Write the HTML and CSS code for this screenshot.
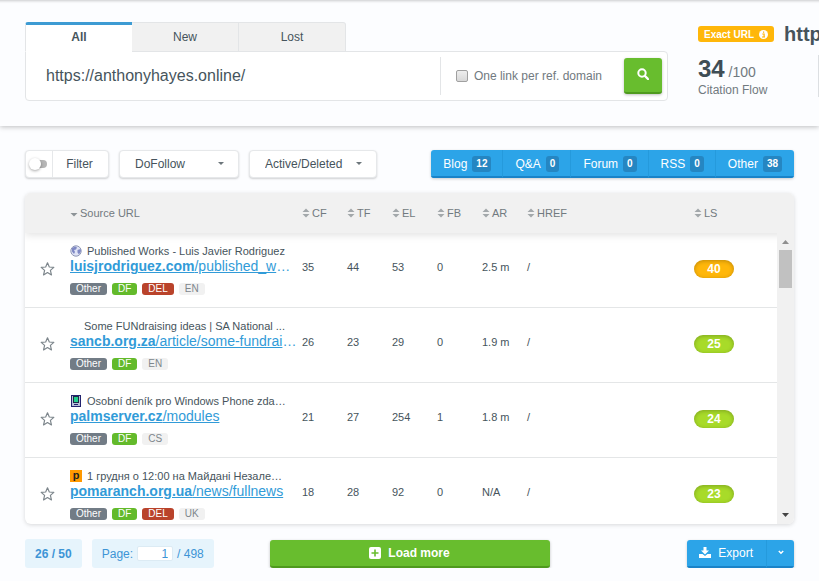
FILE: index.html
```
<!DOCTYPE html>
<html lang="en">
<head>
    <meta charset="UTF-8">
    <meta name="viewport" content="width=device-width, initial-scale=1.0">
    <title>Backlinks</title>
    <link rel="stylesheet" href="styles.css">
</head>
<body>
    <svg class="sprite" width="0" height="0">
        <symbol id="star" viewBox="0 0 14 14">
            <path d="M7 1.2l1.7 3.9 4.2.4-3.2 2.8 1 4.2L7 10.3l-3.7 2.2 1-4.2L1.1 5.5l4.2-.4z" fill="none" stroke="#7d868c" stroke-width="1.1" stroke-linejoin="round"/>
        </symbol>
        <symbol id="sort" viewBox="0 0 8 10">
            <path d="M4 .5L7.5 4h-7zM4 9.5L.5 6h7z" fill="#a3a8ab"/>
        </symbol>
    </svg>

    <header class="top">
        <div class="search">
            <div class="tabs">
                <button class="tab active" type="button">All</button>
                <button class="tab" type="button">New</button>
                <button class="tab" type="button">Lost</button>
            </div>
            <form class="search-box">
                <input class="url-input" type="text" aria-label="URL" value="https://anthonyhayes.online/">
                <label class="one-link"><input type="checkbox"> One link per ref. domain</label>
                <button class="search-btn green" type="button" aria-label="Search">
                    <svg width="12" height="12" viewBox="0 0 12 12"><circle cx="5" cy="5" r="3.7" fill="none" stroke="#fff" stroke-width="2"/><path d="M8 8l3 3" stroke="#fff" stroke-width="2.4" stroke-linecap="round"/></svg>
                </button>
            </form>
        </div>
        <div class="summary">
            <div class="summary-title">
                <span class="exact">Exact URL
                    <svg width="9" height="9" viewBox="0 0 9 9"><circle cx="4.5" cy="4.5" r="4.5" fill="#fff"/><path d="M3.3 4h1.8v2.6M3 7h3M4 2.2h1.2" stroke="#ffb400" stroke-width="1.2" fill="none"/></svg>
                </span>
                <span class="summary-url">http</span>
            </div>
            <div class="metrics">
                <div class="metric">
                    <div class="score"><b>34</b> /100</div>
                    <div class="score-name">Citation Flow</div>
                </div>
            </div>
        </div>
    </header>

    <main class="content">
        <div class="toolbar">
            <div class="filter">
                <label class="switch"><input type="checkbox" aria-label="Enable filter"><span class="knob"></span></label>
                <button class="filter-btn" type="button">Filter</button>
            </div>
            <div class="dropdown follow">
                <select aria-label="Link type"><option>DoFollow</option></select>
            </div>
            <div class="dropdown state">
                <select aria-label="Link state"><option>Active/Deleted</option></select>
            </div>
            <div class="types">
                <button type="button">Blog <span class="count">12</span></button>
                <button type="button">Q&amp;A <span class="count">0</span></button>
                <button type="button">Forum <span class="count">0</span></button>
                <button type="button">RSS <span class="count">0</span></button>
                <button type="button">Other <span class="count">38</span></button>
            </div>
        </div>

        <div class="card">
            <table class="links">
                <thead>
                    <tr>
                        <th></th>
                        <th><svg class="sort" viewBox="0 0 8 10"><path d="M.5 5h7L4 8.5z" fill="#8d9397"/></svg>Source URL</th>
                        <th><svg class="sort"><use href="#sort"/></svg>CF</th>
                        <th><svg class="sort"><use href="#sort"/></svg>TF</th>
                        <th><svg class="sort"><use href="#sort"/></svg>EL</th>
                        <th><svg class="sort"><use href="#sort"/></svg>FB</th>
                        <th><svg class="sort"><use href="#sort"/></svg>AR</th>
                        <th><svg class="sort"><use href="#sort"/></svg>HREF</th>
                        <th><svg class="sort"><use href="#sort"/></svg>LS</th>
                    </tr>
                </thead>
                <tbody>
                    <tr>
                        <td class="fav"><svg class="star"><use href="#star"/></svg></td>
                        <td class="source">
                            <div class="title">
                                <svg class="favicon" viewBox="0 0 12 12"><circle cx="6" cy="6" r="5.2" fill="#dfe3f5" stroke="#8f97b5"/><path d="M2 3l3-1.5 2 1-1 2-2 .5 1 2-1 2-2-2.5zM7.5 5l3-1 .5 2-2 3.5-1.500-2z" fill="#7f88c4"/></svg>
                                <span>Published Works - Luis Javier Rodriguez</span>
                            </div>
                            <div class="link"><a href="#"><b>luisjrodriguez.com</b>/published_w</a>…</div>
                            <div class="tags"><span class="tag other">Other</span><span class="tag df">DF</span><span class="tag del">DEL</span><span class="tag">EN</span></div>
                        </td>
                        <td>35</td>
                        <td>44</td>
                        <td>53</td>
                        <td>0</td>
                        <td>2.5 m</td>
                        <td>/</td>
                        <td><span class="pill orange">40</span></td>
                    </tr>
                    <tr>
                        <td class="fav"><svg class="star"><use href="#star"/></svg></td>
                        <td class="source">
                            <div class="title no-icon"><span>Some FUNdraising ideas | SA National ...</span></div>
                            <div class="link"><a href="#"><b>sancb.org.za</b>/article/some-fundrai</a>…</div>
                            <div class="tags"><span class="tag other">Other</span><span class="tag df">DF</span><span class="tag">EN</span></div>
                        </td>
                        <td>26</td>
                        <td>23</td>
                        <td>29</td>
                        <td>0</td>
                        <td>1.9 m</td>
                        <td>/</td>
                        <td><span class="pill">25</span></td>
                    </tr>
                    <tr>
                        <td class="fav"><svg class="star"><use href="#star"/></svg></td>
                        <td class="source">
                            <div class="title">
                                <svg class="favicon" viewBox="0 0 12 12"><path d="M1 0h10v12H1z" fill="#23236e"/><path d="M2 1h8v10H2z" fill="#b9c0d8"/><path d="M3 1h6v7H3z" fill="#1c2a4a"/><path d="M4 2h4v5H4z" fill="#22d08a"/><path d="M4 9h4v1H4z" fill="#23236e"/></svg>
                                <span>Osobní deník pro Windows Phone zda…</span>
                            </div>
                            <div class="link"><a href="#"><b>palmserver.cz</b>/modules</a></div>
                            <div class="tags"><span class="tag other">Other</span><span class="tag df">DF</span><span class="tag">CS</span></div>
                        </td>
                        <td>21</td>
                        <td>27</td>
                        <td>254</td>
                        <td>1</td>
                        <td>1.8 m</td>
                        <td>/</td>
                        <td><span class="pill">24</span></td>
                    </tr>
                    <tr>
                        <td class="fav"><svg class="star"><use href="#star"/></svg></td>
                        <td class="source">
                            <div class="title">
                                <span class="favicon letter">p</span>
                                <span>1 грудня о 12:00 на Майдані Незале…</span>
                            </div>
                            <div class="link"><a href="#"><b>pomaranch.org.ua</b>/news/fullnews</a></div>
                            <div class="tags"><span class="tag other">Other</span><span class="tag df">DF</span><span class="tag del">DEL</span><span class="tag">UK</span></div>
                        </td>
                        <td>18</td>
                        <td>28</td>
                        <td>92</td>
                        <td>0</td>
                        <td>N/A</td>
                        <td>/</td>
                        <td><span class="pill">23</span></td>
                    </tr>
                </tbody>
            </table>
            <div class="scrollbar">
                <svg width="7" height="4" viewBox="0 0 7 4"><path d="M3.5 0L7 4H0z" fill="#8f8f8f"/></svg>
                <div class="thumb"></div>
                <svg class="down" width="7" height="4" viewBox="0 0 7 4"><path d="M0 0h7L3.5 4z" fill="#444"/></svg>
            </div>
        </div>

        <div class="footer">
            <div class="pages">
                <div class="info"><b>26 / 50</b></div>
                <div class="info">
                    <label for="page">Page:</label>
                    <input id="page" type="text" value="1">
                    <span>/ 498</span>
                </div>
            </div>
            <button class="load green" type="button">
                <svg width="12" height="12" viewBox="0 0 12 12"><rect width="12" height="12" rx="2" fill="#fff"/><path d="M6 2.5v7M2.5 6h7" stroke="#68bd2e" stroke-width="1.6"/></svg>
                Load more
            </button>
            <div class="export">
                <button type="button">
                    <svg width="12" height="11" viewBox="0 0 12 11"><path d="M4.5 0h3v3.5H10L6 7.5 2 3.5h2.5zM0 7h3.5L6 9l2.500-2H12v4H0z" fill="#fff"/></svg>
                    Export
                </button>
                <button class="more" type="button" aria-label="Export options">
                    <svg width="6" height="5" viewBox="0 0 6 5"><path d="M.8 1L3 3.2 5.2 1" fill="none" stroke="#fff" stroke-width="1.5"/></svg>
                </button>
            </div>
        </div>
    </main>
</body>
</html>
```
FILE: styles.css
```
* {
    box-sizing: border-box;
}
body {
    margin: 0;
    font-family: "Liberation Sans", Arial, sans-serif;
    font-size: 12px;
    color: #46545c;
    background-color: #fcfdff;
    overflow: hidden;
}
button, input, select {
    font: inherit;
    color: inherit;
    margin: 0;
}
button {
    border: none;
    cursor: pointer;
    padding: 0;
}
svg {
    flex: none;
}
.sprite {
    position: absolute;
}
.green {
    background-color: #68bd2e;
    color: #fff;
    border-bottom: 2px solid #4f9a1e;
    border-radius: 3px;
    box-shadow: 0 1px 3px rgba(0, 0, 0, 0.25);
}

/* top search area */
.top {
    display: flex;
    gap: 30px;
    padding: 22px 0 25px 25px;
    box-shadow: inset 0 4px 3px -3px rgba(0, 0, 0, 0.2), 0 1px 5px rgba(0, 0, 0, 0.25);
}
.search {
    flex: 1;
}
.tabs {
    display: flex;
    width: 321px;
}
.tab {
    flex: 1;
    height: 30px;
    background-color: #f1f1f1;
    border: 1px solid #e3e5e7;
    border-left: none;
}
.tab:last-child {
    border-radius: 0 3px 0 0;
}
.tab.active {
    background-color: #fff;
    border-top: 3px solid #3d9bd3;
    border-left: 1px solid #e3e5e7;
    border-right: none;
    border-bottom-color: #fff;
    border-radius: 3px 0 0 0;
    font-weight: bold;
    padding-bottom: 2px;
    z-index: 1;
}
.search-box {
    display: flex;
    align-items: center;
    height: 50px;
    margin-top: -1px;
    padding: 0 5px 0 0;
    background-color: #fff;
    border: 1px solid #e3e5e7;
    border-radius: 0 4px 4px 4px;
}
.url-input {
    flex: 1;
    min-width: 0;
    border: none;
    padding: 0 20px;
    background: none;
    font-size: 16px;
    outline: none;
}
.one-link {
    display: flex;
    align-items: center;
    gap: 6px;
    height: 38px;
    padding: 0 22px 0 15px;
    border-left: 1px solid #e3e5e7;
    color: #717a80;
}
.one-link input {
    appearance: none;
    width: 12px;
    height: 12px;
    border: 1px solid #a0a0a0;
    border-radius: 2px;
    background: linear-gradient(#eee, #d8d8d8);
}
.search-btn {
    width: 38px;
    height: 36px;
}
.summary {
    width: 121px;
    overflow: hidden;
}
.summary-title {
    display: flex;
    align-items: center;
    gap: 10px;
    height: 24px;
}
.exact {
    display: flex;
    align-items: center;
    gap: 5px;
    height: 16px;
    padding: 0 6px;
    border-radius: 3px;
    background-color: #ffb70a;
    color: #fff;
    font-size: 10px;
    font-weight: bold;
    white-space: nowrap;
}
.summary-url {
    font-size: 20px;
    font-weight: bold;
}
.metrics {
    display: flex;
    margin-top: 9px;
    height: 42px;
    border-right: 1px solid #dcdfe2;
}
.score {
    height: 27px;
    font-size: 14px;
    line-height: 27px;
    color: #717a80;
}
.score b {
    font-size: 24px;
    color: #3f4d55;
}
.score-name {
    line-height: 16px;
    color: #717a80;
}

/* filters */
.content {
    padding: 24px 25px 0;
}
.toolbar {
    display: flex;
    gap: 10px;
    height: 28px;
}
.filter, .dropdown {
    background-color: #fff;
    border: 1px solid #e6e8ea;
    border-radius: 4px;
    box-shadow: 0 1px 2px rgba(0, 0, 0, 0.18);
}
.filter {
    display: flex;
    width: 84px;
}
.switch {
    display: flex;
    align-items: center;
    width: 27px;
    padding-left: 4px;
    border-right: 1px solid #e6e8ea;
}
.switch input {
    appearance: none;
    width: 17px;
    height: 8px;
    border-radius: 4px;
    background-color: #b5b5b5;
}
.knob {
    width: 12px;
    height: 12px;
    margin-left: -18px;
    border-radius: 50%;
    background-color: #fff;
    box-shadow: 0 1px 3px rgba(0, 0, 0, 0.35);
}
.filter-btn {
    flex: 1;
    padding-right: 2px;
    background: none;
}
.dropdown {
    position: relative;
    width: 120px;
}
.dropdown.state {
    width: 128px;
}
.dropdown select {
    appearance: none;
    width: 100%;
    height: 100%;
    padding: 0 15px;
    border: none;
    background: none;
}
.dropdown::after {
    content: "";
    position: absolute;
    right: 14px;
    top: 11px;
    border: 3px solid transparent;
    border-top-color: #6d767b;
    pointer-events: none;
}
.types {
    display: flex;
    margin-left: auto;
}
.types button, .export button {
    display: flex;
    align-items: center;
    background-color: #2ca4e8;
    color: #fff;
    border-bottom: 2px solid #1a83c8;
}
.types, .export {
    border-radius: 3px;
    overflow: hidden;
    box-shadow: 0 1px 3px rgba(0, 0, 0, 0.2);
}
.types button {
    gap: 5px;
    padding: 1px 11px 0 12px;
}
.types button:last-child {
    padding-right: 12px;
}
.types button + button, .export button + button {
    border-left: 1px solid #259adc;
}
.count {
    padding: 0 4px;
    border-radius: 3px;
    background-color: #2586c2;
    font-size: 10px;
    font-weight: bold;
    line-height: 16px;
}

/* links table */
.card {
    position: relative;
    margin-top: 15px;
    background-color: #fff;
    border-radius: 6px;
    box-shadow: 0 1px 4px rgba(0, 0, 0, 0.15);
    overflow: hidden;
}
.links {
    display: block;
    font-size: 11px;
}
.links thead {
    display: block;
    position: relative;
    background-color: #f1f1f1;
    box-shadow: 0 2px 8px rgba(0, 0, 0, 0.12);
}
.links tbody {
    display: block;
    max-height: 291px;
    overflow: hidden;
}
.links tr {
    display: grid;
    grid-template-columns: 45px 232px repeat(5, 45px) 1fr 100px;
}
.links th {
    display: flex;
    align-items: center;
    gap: 2px;
    height: 40px;
    padding: 0;
    font-weight: normal;
    color: #717a80;
}
.links tbody tr {
    height: 75px;
    border-bottom: 1px solid #e4e6e7;
}
.links td {
    padding: 26px 0 0;
    line-height: 16px;
}
.sort {
    width: 8px;
    height: 10px;
}
.links .fav {
    padding-left: 15px;
}
.star {
    display: block;
    width: 15px;
    height: 20px;
}
.links .source {
    padding: 11px 0 0;
    white-space: nowrap;
    overflow: hidden;
}
.title {
    display: flex;
    align-items: center;
    gap: 5px;
    line-height: 14px;
}
.title.no-icon {
    padding-left: 14px;
}
.favicon {
    width: 12px;
    height: 12px;
}
.favicon.letter {
    background-color: #f90;
    color: #222;
    font-weight: bold;
    line-height: 10px;
    text-align: center;
}
.link {
    font-size: 14px;
    line-height: 16px;
    color: #319bd8;
}
.link a {
    color: inherit;
}
.tags {
    display: flex;
    gap: 5px;
    margin-top: 9px;
}
.tag {
    padding: 0 6px;
    border-radius: 3px;
    background-color: #f1f1f1;
    color: #7d868c;
    font-size: 10px;
    line-height: 12px;
}
.tag.other {
    background-color: #727c86;
    color: #fff;
}
.tag.df {
    background-color: #63ba2b;
    color: #fff;
}
.tag.del {
    background-color: #b9432b;
    color: #fff;
}
.pill {
    display: block;
    width: 40px;
    margin-top: 1px;
    border-radius: 9px;
    background-color: #a8db29;
    box-shadow: inset 0 1px 4px rgba(0, 0, 0, 0.25);
    color: #fff;
    font-size: 12px;
    font-weight: bold;
    line-height: 18px;
    text-align: center;
}
.pill.orange {
    background-color: #ffb70a;
}
.scrollbar {
    position: absolute;
    top: 40px;
    right: 0;
    bottom: 0;
    display: flex;
    flex-direction: column;
    align-items: center;
    width: 17px;
    padding: 7px 0;
    background-color: #f1f1f1;
}
.thumb {
    width: 13px;
    height: 38px;
    margin-top: 6px;
    background-color: #c1c1c1;
}
.scrollbar .down {
    margin-top: auto;
}

/* footer */
.footer {
    display: grid;
    grid-template-columns: 1fr 280px 1fr;
    align-items: center;
    margin-top: 15px;
}
.pages {
    display: flex;
    gap: 10px;
}
.info {
    display: flex;
    align-items: center;
    gap: 4px;
    height: 29px;
    padding: 0 10px;
    border-radius: 3px;
    background-color: #e6f4fc;
    color: #3d95d6;
    white-space: nowrap;
}
.info input {
    width: 36px;
    height: 15px;
    padding: 0 4px;
    border: 1px solid #dcebf4;
    border-radius: 2px;
    background-color: #fff;
    text-align: right;
}
.load {
    display: flex;
    align-items: center;
    justify-content: center;
    gap: 7px;
    height: 28px;
    font-weight: bold;
}
.export {
    display: flex;
    justify-self: end;
    height: 28px;
}
.export button {
    gap: 7px;
    padding: 0 13px 0 12px;
}
.export .more {
    width: 28px;
    padding: 0;
    justify-content: center;
}
```
